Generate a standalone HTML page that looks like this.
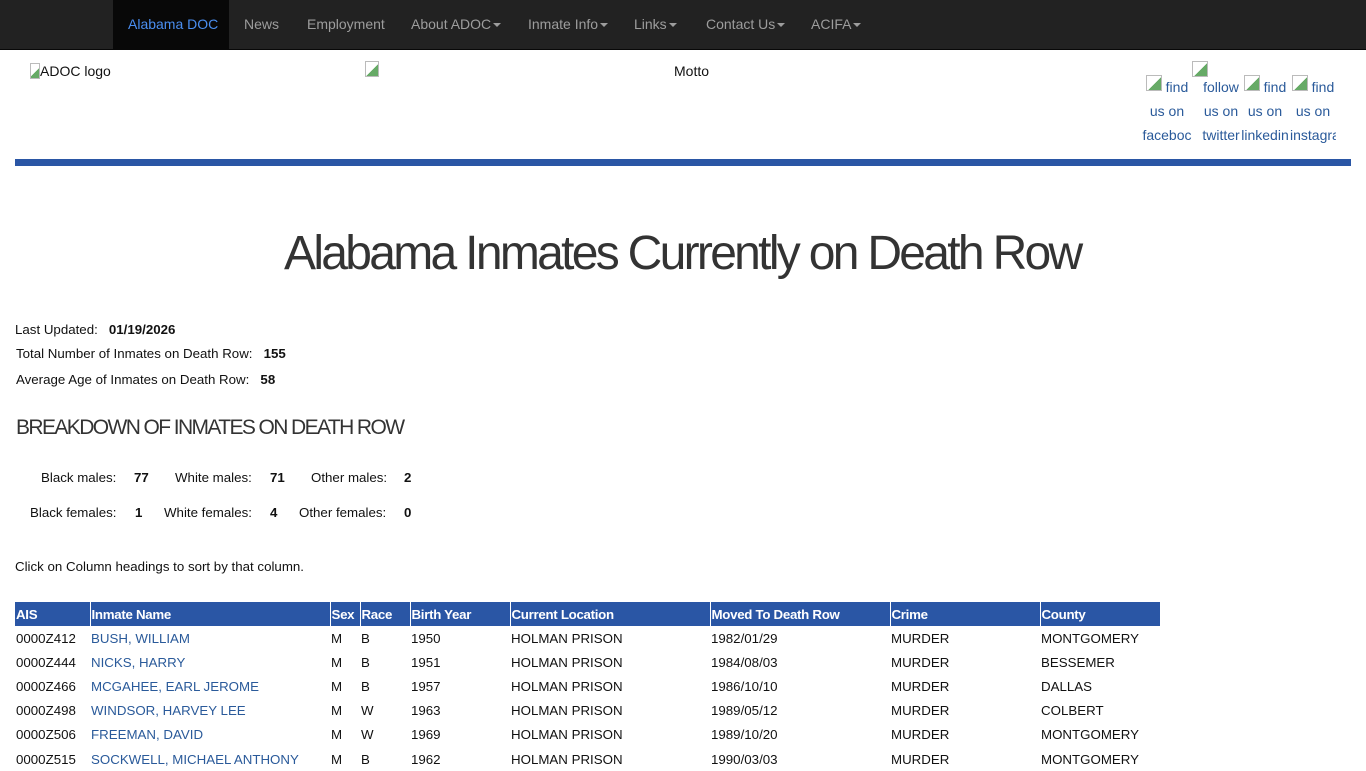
<!DOCTYPE html>
<html><head><meta charset="utf-8"><style>
*{margin:0;padding:0;box-sizing:border-box}
body{width:1366px;height:768px;overflow:hidden;background:#fff;font-family:"Liberation Sans",Arial,sans-serif;font-size:13.3px;color:#111;position:relative}
.a{position:absolute;white-space:nowrap}
.nav{position:absolute;left:0;top:0;width:1366px;height:50px;background:#222;border-bottom:1px solid #080808}
.nav span{position:absolute;top:16px;color:#9d9d9d;font-size:14px}
.car{display:inline-block;width:0;height:0;border-left:4px solid transparent;border-right:4px solid transparent;border-top:4px solid #9d9d9d;vertical-align:middle;margin-left:2px}
.bi{display:inline-block;width:16px;height:16px;border:1px solid #bbb;vertical-align:top;background:linear-gradient(135deg,#fff 55%,#6a6 55%)}
.lnk{color:#2a5a9a}
table{position:absolute;left:15px;top:602px;border-collapse:collapse;font-size:13.3px}
th{background:#2a56a5;color:#fff;text-align:left;height:24px;font-weight:bold;padding:0 1px;border-left:1px solid #fff;letter-spacing:-0.3px}
th:first-child{border-left:none}
td{height:24.2px;padding:0 1px;vertical-align:middle}
b{font-weight:bold}
</style></head><body>
<div class="nav">
<div style="position:absolute;left:113px;top:0;width:116px;height:50px;background:#080808"></div>
<span style="left:128px;color:#4a8ef0">Alabama DOC</span>
<span style="left:244px">News</span>
<span style="left:307px">Employment</span>
<span style="left:411px">About ADOC<i class="car"></i></span>
<span style="left:528px">Inmate Info<i class="car"></i></span>
<span style="left:634px">Links<i class="car"></i></span>
<span style="left:706px">Contact Us<i class="car"></i></span>
<span style="left:811px">ACIFA<i class="car"></i></span>
</div>
<div class="a" style="left:30px;top:63px;font-size:14px"><i class="bi" style="width:10px"></i>ADOC logo</div>
<div class="a" style="left:365px;top:61px"><i class="bi" style="width:14px"></i></div>
<div class="a" style="left:674px;top:63px;font-size:14px">Motto</div>
<div class="a" style="left:1192px;top:61px"><i class="bi"></i></div>
<div class="a lnk" style="left:1142px;top:75px;font-size:14px;line-height:24px;text-align:center;width:50px;white-space:normal;overflow:hidden;height:72px"><i class="bi"></i> find us on faceboc</div>
<div class="a lnk" style="left:1199px;top:75px;font-size:14px;line-height:24px;text-align:center;width:44px">follow<br>us on<br>twitter</div>
<div class="a lnk" style="left:1240px;top:75px;font-size:14px;line-height:24px;text-align:center;width:50px;white-space:normal;height:72px;overflow:hidden"><i class="bi"></i> find us on linkedin</div>
<div class="a lnk" style="left:1290px;top:75px;font-size:14px;line-height:24px;text-align:center;width:46px;white-space:normal;height:72px;overflow:hidden"><i class="bi"></i> find us on instagra</div>
<div class="a" style="left:15px;top:159px;width:1336px;height:7px;background:#2a56a5"></div>
<div class="a" style="left:284px;top:226px;font-size:48px;color:#333;letter-spacing:-2.7px">Alabama Inmates Currently on Death Row</div>
<div class="a" style="left:15px;top:322px">Last Updated:&nbsp;&nbsp; <b>01/19/2026</b></div>
<div class="a" style="left:16px;top:346px">Total Number of Inmates on Death Row:&nbsp;&nbsp; <b>155</b></div>
<div class="a" style="left:16px;top:372px">Average Age of Inmates on Death Row:&nbsp;&nbsp; <b>58</b></div>
<div class="a" style="left:16px;top:416px;font-size:21px;color:#333;letter-spacing:-1.6px">BREAKDOWN OF INMATES ON DEATH ROW</div>
<div class="a" style="left:41px;top:470px">Black males:</div><div class="a" style="left:134px;top:470px"><b>77</b></div>
<div class="a" style="left:175px;top:470px">White males:</div><div class="a" style="left:270px;top:470px"><b>71</b></div>
<div class="a" style="left:311px;top:470px">Other males:</div><div class="a" style="left:404px;top:470px"><b>2</b></div>
<div class="a" style="left:30px;top:505px">Black females:</div><div class="a" style="left:135px;top:505px"><b>1</b></div>
<div class="a" style="left:164px;top:505px">White females:</div><div class="a" style="left:270px;top:505px"><b>4</b></div>
<div class="a" style="left:299px;top:505px">Other females:</div><div class="a" style="left:404px;top:505px"><b>0</b></div>
<div class="a" style="left:15px;top:559px">Click on Column headings to sort by that column.</div>
<table>
<colgroup><col style="width:75px"><col style="width:240px"><col style="width:30px"><col style="width:50px"><col style="width:100px"><col style="width:200px"><col style="width:180px"><col style="width:150px"><col style="width:120px"></colgroup>
<tr><th>AIS</th><th>Inmate Name</th><th>Sex</th><th>Race</th><th>Birth Year</th><th>Current Location</th><th>Moved To Death Row</th><th>Crime</th><th>County</th></tr>
<tr><td>0000Z412</td><td class="lnk">BUSH, WILLIAM</td><td>M</td><td>B</td><td>1950</td><td>HOLMAN PRISON</td><td>1982/01/29</td><td>MURDER</td><td>MONTGOMERY</td></tr>
<tr><td>0000Z444</td><td class="lnk">NICKS, HARRY</td><td>M</td><td>B</td><td>1951</td><td>HOLMAN PRISON</td><td>1984/08/03</td><td>MURDER</td><td>BESSEMER</td></tr>
<tr><td>0000Z466</td><td class="lnk">MCGAHEE, EARL JEROME</td><td>M</td><td>B</td><td>1957</td><td>HOLMAN PRISON</td><td>1986/10/10</td><td>MURDER</td><td>DALLAS</td></tr>
<tr><td>0000Z498</td><td class="lnk">WINDSOR, HARVEY LEE</td><td>M</td><td>W</td><td>1963</td><td>HOLMAN PRISON</td><td>1989/05/12</td><td>MURDER</td><td>COLBERT</td></tr>
<tr><td>0000Z506</td><td class="lnk">FREEMAN, DAVID</td><td>M</td><td>W</td><td>1969</td><td>HOLMAN PRISON</td><td>1989/10/20</td><td>MURDER</td><td>MONTGOMERY</td></tr>
<tr><td>0000Z515</td><td class="lnk">SOCKWELL, MICHAEL ANTHONY</td><td>M</td><td>B</td><td>1962</td><td>HOLMAN PRISON</td><td>1990/03/03</td><td>MURDER</td><td>MONTGOMERY</td></tr>
</table>
</body></html>
